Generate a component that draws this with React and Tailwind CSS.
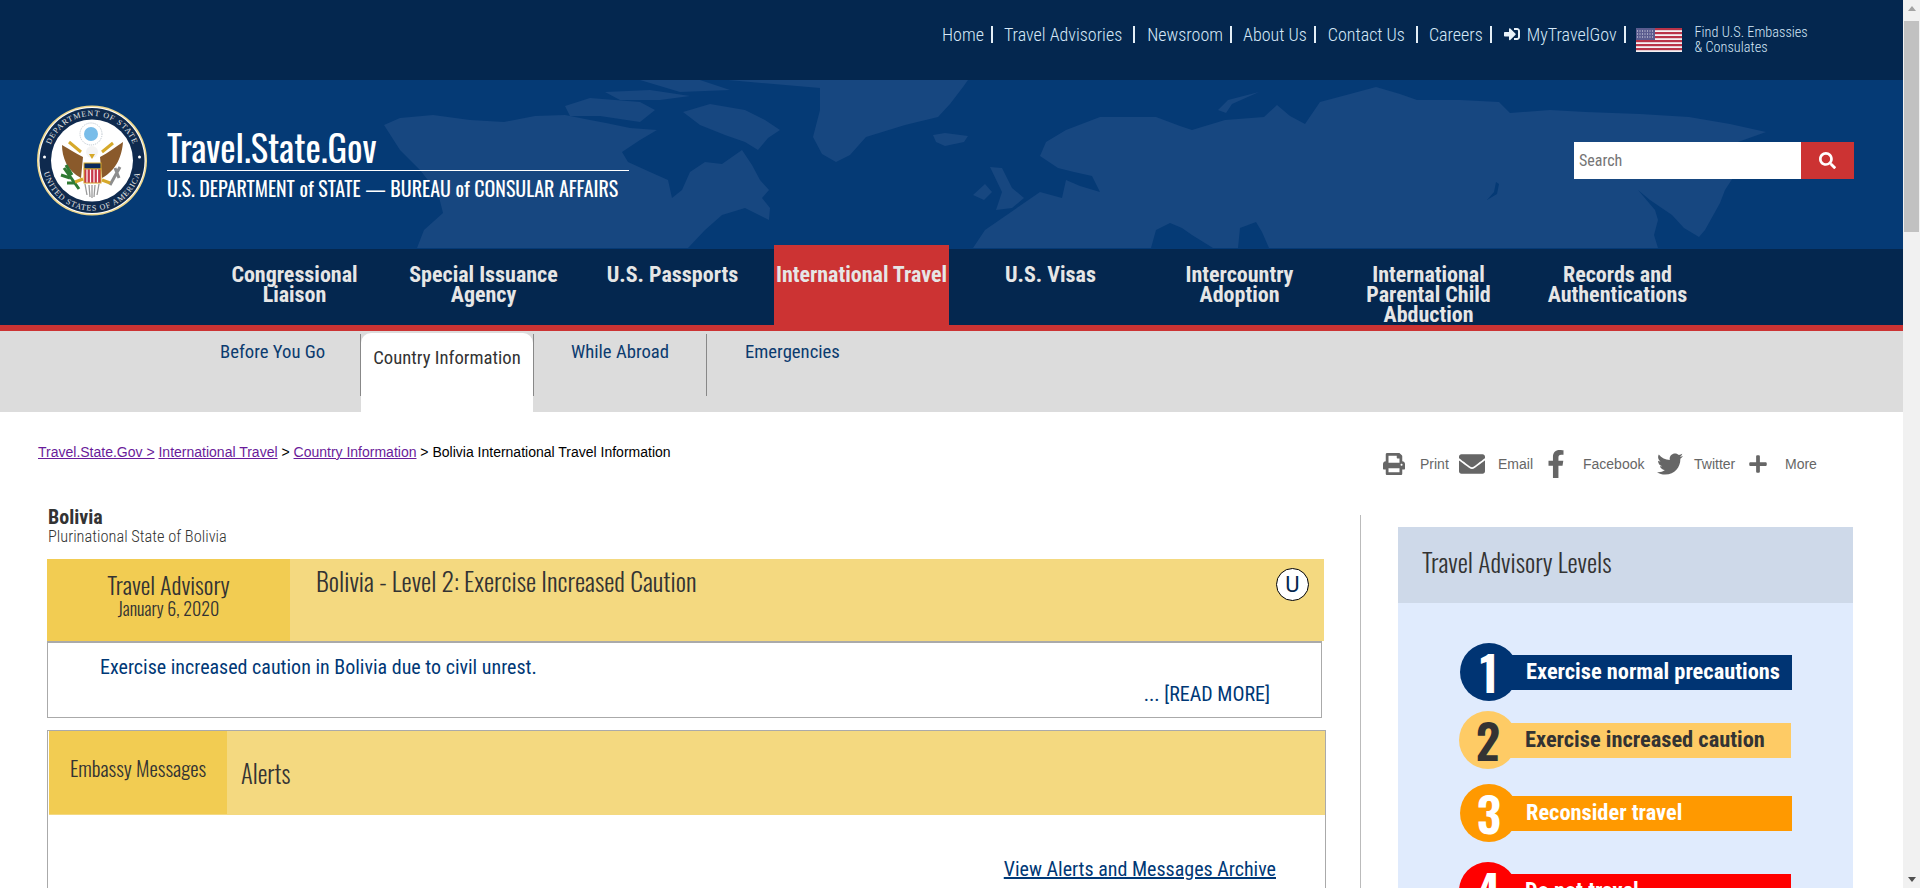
import { FaSearch, FaSignInAlt, FaPrint, FaEnvelope, FaFacebookF, FaTwitter, FaPlus } from 'react-icons/fa'

const oswald = "font-['Oswald','Roboto_Condensed','Roboto',sans-serif]"
const cond = "font-['Roboto_Condensed','Roboto',sans-serif]"

const topLinks = [
  { label: 'Home', cls: 'ml-[942px]', sep: 'ml-[7px]' },
  { label: 'Travel Advisories', cls: 'ml-[11px]', sep: 'ml-[11px]' },
  { label: 'Newsroom', cls: 'ml-[12px]', sep: 'ml-[7px]' },
  { label: 'About Us', cls: 'ml-[11px]', sep: 'ml-[7px]' },
  { label: 'Contact Us', cls: 'ml-[12px]', sep: 'ml-[11px]' },
  { label: 'Careers', cls: 'ml-[11px]', sep: 'ml-[7px]' },
]

const mainNav = [
  ['Congressional', 'Liaison'],
  ['Special Issuance', 'Agency'],
  ['U.S. Passports'],
  ['International Travel'],
  ['U.S. Visas'],
  ['Intercountry', 'Adoption'],
  ['International', 'Parental Child', 'Abduction'],
  ['Records and', 'Authentications'],
]

const levels = [
  { n: '1', text: 'Exercise normal precautions', bg: 'bg-[#003473]', fg: 'text-white', cls: 'mt-[40px] ml-[62px]' },
  { n: '2', text: 'Exercise increased caution', bg: 'bg-[#fecb65]', fg: 'text-[#333333]', cls: 'mt-[10px] ml-[61px]' },
  { n: '3', text: 'Reconsider travel', bg: 'bg-[#ff9900]', fg: 'text-white', cls: 'mt-[15px] ml-[62px]' },
  { n: '4', text: 'Do not travel', bg: 'bg-[#ff0000]', fg: 'text-white', cls: 'mt-[20px] ml-[61px]' },
]

function WorldMap() {
  // rough land outline of the header background
  const land = [
    // north america
    'M384 45 L400 38 L433 35 L470 40 L504 42 L535 36 L565 35 L590 40 L606 43 L630 48 L657 50 L640 60 L622 72 L628 82 L650 92 L668 100 L672 118 L682 110 L690 92 L705 82 L722 84 L742 70 L752 85 L760 100 L769 110 L762 118 L770 128 L769 140 L745 128 L722 135 L705 150 L688 168 L417 168 L424 150 L443 133 L438 113 L420 90 L400 70 Z',
    // arctic islands
    'M565 26 L590 18 L640 22 L655 30 L640 42 L600 36 L570 36 Z',
    'M605 12 L650 10 L690 16 L660 20 L620 20 Z',
    'M683 32 L710 24 L745 30 L765 40 L780 50 L768 58 L758 70 L745 62 L725 55 L700 45 Z',
    'M640 0 L700 0 L730 10 L680 12 Z',
    // greenland
    'M728 0 L968 0 L963 7 L950 24 L938 37 L905 45 L866 57 L850 75 L836 82 L822 74 L813 57 L820 30 L820 8 Z',
    // iceland
    'M933 55 L945 53 L968 56 L964 62 L945 66 L936 62 Z',
    // uk and ireland
    'M990 87 L1002 88 L1012 108 L1024 118 L1012 128 L996 130 L1002 112 Z',
    'M973 115 L985 104 L992 112 L984 120 Z',
    // eurasia with inland seas
    'M973 168 L985 150 L1014 130 L1040 112 L1062 118 L1066 100 L1080 106 L1100 112 L1092 96 L1074 92 L1058 88 L1040 76 L1046 62 L1066 50 L1100 37 L1156 37 L1180 46 L1192 50 L1225 40 L1264 37 L1277 25 L1290 36 L1305 44 L1320 22 L1350 14 L1376 7 L1400 14 L1417 20 L1460 20 L1499 22 L1510 33 L1550 30 L1586 32 L1640 34 L1689 37 L1730 44 L1766 52 L1738 62 L1742 84 L1725 110 L1720 123 L1705 150 L1699 157 L1684 148 L1672 135 L1650 120 L1638 110 L1655 130 L1658 140 L1654 155 L1658 168 Z',
    'M1151 168 L1156 150 L1170 143 L1182 148 L1192 155 L1213 168 Z',
    'M1238 168 L1240 148 L1256 142 L1262 152 L1269 168 Z',
    'M1487 120 L1494 112 L1496 102 L1499 104 L1497 114 Z',
    // novaya zemlya
    'M1218 30 L1228 20 L1259 12 L1232 24 L1226 33 Z',
  ]
  return (
    <svg className="absolute left-0 top-0 w-[1903px] h-[168px]" viewBox="0 0 1903 168" aria-hidden="true">
      <path d={land.join(' ')} fill="#174780" fillRule="evenodd" />
    </svg>
  )
}

function Seal() {
  return (
    <svg className="w-[110px] h-[111px] shrink-0" viewBox="0 0 110 111" aria-hidden="true">
      <defs>
        <path id="sealTop" d="M13 68 A44 44 0 1 1 97 68" />
        <path id="sealBottom" d="M7 44 A49.5 49.5 0 1 0 103 44" />
      </defs>
      <circle cx="55" cy="55.5" r="55" fill="#ecd58a" />
      <circle cx="55" cy="55.5" r="53.5" fill="#fff" />
      <circle cx="55" cy="55.5" r="52.5" fill="#0f2a4e" />
      <circle cx="55" cy="55.5" r="41" fill="#fff" />
      <text fontFamily="Liberation Serif, serif" fontSize="8" fill="#e8e8e8" letterSpacing="0.9">
        <textPath href="#sealTop" startOffset="50%" textAnchor="middle">DEPARTMENT OF STATE</textPath>
      </text>
      <text fontFamily="Liberation Serif, serif" fontSize="8" fill="#e8e8e8" letterSpacing="0.9">
        <textPath href="#sealBottom" startOffset="50%" textAnchor="middle">UNITED STATES OF AMERICA</textPath>
      </text>
      <circle cx="7.5" cy="52" r="1.5" fill="#fff" />
      <circle cx="102.5" cy="52" r="1.5" fill="#fff" />
      {/* glory */}
      <circle cx="54" cy="29" r="11" fill="#fff" stroke="#b9c3cc" strokeDasharray="1 1" />
      <circle cx="54" cy="29" r="7" fill="#79bde9" />
      {/* wings */}
      <path d="M46 52 C38 48 32 44 25 40 C25 52 30 66 44 73 Z" fill="#8a5a2b" />
      <path d="M63 52 C71 48 78 42 86 37 C85 50 80 65 65 73 Z" fill="#8a5a2b" />
      <path d="M32 37 L44 47 M76 38 L65 47" stroke="#d6a92a" strokeWidth="3" />
      <circle cx="55" cy="47" r="6" fill="#f4f4f4" />
      <path d="M52 49 L55 54 L58 49 Z" fill="#d6a92a" />
      {/* shield */}
      <rect x="47" y="58" width="17" height="6" fill="#0b2a5c" stroke="#d6a92a" />
      <rect x="47" y="64" width="17" height="14" fill="#c8394b" stroke="#d6a92a" />
      <path d="M50 64.5 V77.5 M53.5 64.5 V77.5 M57 64.5 V77.5 M60.5 64.5 V77.5" stroke="#fff" strokeWidth="1.2" />
      {/* olive and arrows */}
      <path d="M27 63 L42 84 M24 70 L33 73 M29 60 L35 70 M30 78 L38 78" stroke="#2f7a33" strokeWidth="3" />
      <path d="M83 62 L73 80 M78 63 L82 73" stroke="#8d8d8d" strokeWidth="3" />
      <path d="M38 77 L46 74 M73 78 L65 75" stroke="#d6a92a" strokeWidth="3" />
      {/* tail */}
      <path d="M48 79 L50 90 M52 80 L53 92 M55 80 L55 93 M58 80 L57 92 M62 79 L60 90" stroke="#9a9a9a" strokeWidth="1.3" />
    </svg>
  )
}

function Flag() {
  return (
    <svg className="w-[46px] h-[24px] ml-[10px] mt-[12px] shrink-0" viewBox="0 0 46 24" aria-hidden="true">
      <rect width="46" height="24" fill="#f4f1f3" />
      {[0, 4, 8, 12, 16, 20].map(y => (
        <rect key={y} y={y} width="46" height="2.2" fill="#b93348" />
      ))}
      <rect width="19" height="12" fill="#5a5c8f" />
      <path d="M1 3 H18 M1 6 H18 M1 9 H18" stroke="#e7e7f0" strokeDasharray="1 1.5" />
    </svg>
  )
}

function Sep({ cls = 'ml-[7px]' }) {
  return <span className={`${cls} w-[2px] h-[17px] bg-[#e4eef6]`}></span>
}

function ShareItem({ icon, label, iconCls, textCls }) {
  return (
    <div className="flex items-center">
      <span className={iconCls}>{icon}</span>
      <span className={textCls}>{label}</span>
    </div>
  )
}

function App() {
  return (
    <div className="flex h-[888px] w-[1920px] overflow-hidden bg-white">
      <div className="w-[1903px] shrink-0">
        {/* top links */}
        <div className={`flex items-center h-[80px] pb-[12px] bg-[#04274f] text-[#d5e8f7] text-[18px] font-light ${cond}`}>
          {topLinks.map(item => (
            <div key={item.label} className={`flex items-center ${item.cls}`}>
              <a>{item.label}</a>
              <Sep cls={item.sep} />
            </div>
          ))}
          <FaSignInAlt className="ml-[11px] w-[18px] h-[16px] text-[#e8f2fa]" />
          <a className="ml-[6px]">MyTravelGov</a>
          <Sep />
          <Flag />
          <div className="ml-[13px] mt-[12px] text-[14.3px] leading-[15px]">
            <div>Find U.S. Embassies</div>
            <div>&amp; Consulates</div>
          </div>
        </div>

        {/* logo band */}
        <div className="relative h-[169px] bg-[#053a75] overflow-hidden">
          <WorldMap />
          <div className="relative flex h-full pl-[37px] pt-[25px]">
            <Seal />
            <div className="ml-[20px] mt-[19px] w-[462px] text-white">
              <div className={`text-[36.5px] leading-[45px] font-normal border-b border-white h-[47px] ${oswald}`}>Travel.State.Gov</div>
              <div className={`mt-[4px] text-[20px] leading-[26px] font-normal whitespace-nowrap ${oswald}`}>U.S. DEPARTMENT of STATE — BUREAU of CONSULAR AFFAIRS</div>
            </div>
            <div className="flex ml-[945px] mt-[37px] h-[37px]">
              <div className={`w-[227px] bg-white pl-[5px] flex items-center text-[16px] text-[#757575] ${cond}`}>Search</div>
              <div className="w-[53px] bg-[#cc3333] flex items-center justify-center text-white">
                <FaSearch className="w-[17px] h-[17px]" />
              </div>
            </div>
          </div>
        </div>

        {/* main nav */}
        <div className={`flex h-[76px] pl-[200px] bg-[#04274f] text-[#e6e6e6] text-[22px] leading-[20px] font-bold text-center ${cond}`}>
          {mainNav.map(lines => (
            lines[0] === 'International Travel' ? (
              <div key={lines[0]} className="relative w-[175px] mx-[7px] -mt-[4px] h-[80px] pt-[20px] bg-[#cc3333] whitespace-nowrap">
                {lines[0]}
              </div>
            ) : (
              <div key={lines[0]} className="w-[189px] pt-[16px]">
                {lines.map(l => <div key={l}>{l}</div>)}
              </div>
            )
          ))}
        </div>
        <div className="h-[6px] bg-[#cc3333]"></div>

        {/* sub nav */}
        <div className={`flex h-[81px] pl-[200px] bg-[#dcdcdc] text-[#0b3b6f] text-[18.7px] leading-[20px] ${cond}`}>
          <div className="w-[161px] h-[62px] mt-[3px] pt-[8px] pl-[20px] border-r border-[#888888]">Before You Go</div>
          <div className="w-[172px] h-[79px] mt-[2px] pt-[15px] text-center bg-white rounded-t-[10px] text-[#333333]">Country Information</div>
          <div className="w-[174px] h-[62px] mt-[3px] pt-[8px] pl-[37px] border-x border-[#888888]">While Abroad</div>
          <div className="h-[62px] mt-[3px] pt-[8px] pl-[38px]">Emergencies</div>
        </div>

        {/* breadcrumb and share */}
        <div className="flex h-[95px] font-['Liberation_Sans',sans-serif]">
          <div className="ml-[38px] w-[700px] mt-[32px] text-[14px] leading-[16px] text-black">
            <a className="underline text-[#6a1b9a]">Travel.State.Gov &gt;</a>{' '}
            <a className="underline text-[#6a1b9a]">International Travel</a> &gt;{' '}
            <a className="underline text-[#6a1b9a]">Country Information</a> &gt; Bolivia International Travel Information
          </div>
          <div className="flex items-center h-[30px] mt-[37px] ml-[644px] text-[14px] text-[#666666]">
            <ShareItem icon={<FaPrint className="w-[24px] h-[22px]" />} label="Print" iconCls="w-[38px]" textCls="w-[38px]" />
            <ShareItem icon={<FaEnvelope className="w-[28px] h-[26px]" />} label="Email" iconCls="w-[40px]" textCls="w-[49px]" />
            <ShareItem icon={<FaFacebookF className="w-[18px] h-[28px]" />} label="Facebook" iconCls="w-[36px]" textCls="w-[73px]" />
            <ShareItem icon={<FaTwitter className="w-[28px] h-[26px]" />} label="Twitter" iconCls="w-[38px]" textCls="w-[54px]" />
            <ShareItem icon={<FaPlus className="w-[20px] h-[20px]" />} label="More" iconCls="w-[37px]" textCls="" />
          </div>
        </div>

        <div className="flex">
          {/* left column */}
          <div className={`ml-[47px] w-[1279px] shrink-0 ${cond}`}>
            <div className="pl-[1px] text-[#333333] h-[40px]">
              <div className="text-[20px] leading-[20px] font-bold">Bolivia</div>
              <div className="text-[16.4px] leading-[20px] font-light">Plurinational State of Bolivia</div>
            </div>

            <div className="flex w-[1277px] h-[82px] mt-[12px] bg-[#f4d980] text-[#333333]">
              <div className={`w-[243px] bg-[#f2cc52] text-center pt-[11px] font-light ${oswald}`}>
                <div className="text-[24px] leading-[28px]">Travel Advisory</div>
                <div className="text-[18px] leading-[20px]">January 6, 2020</div>
              </div>
              <div className={`flex-1 pl-[26px] pt-[5px] text-[25.6px] leading-[32px] font-light ${oswald}`}>Bolivia - Level 2: Exercise Increased Caution</div>
              <div className="flex items-center justify-center w-[33px] h-[33px] mt-[9px] mr-[15px] rounded-full bg-white border border-black text-[#04274f] text-[22px] font-['Roboto',sans-serif]">U</div>
            </div>
            <div className="relative w-[1275px] h-[77px] border border-t-2 border-[#aaaaaa] text-[#003876] text-[20px]">
              <div className="pl-[52px] pt-[12px] leading-[24px]">Exercise increased caution in Bolivia due to civil unrest.</div>
              <div className="text-right pr-[51px] pt-[3px] leading-[24px]">... [READ MORE]</div>
            </div>

            <div className="mt-[12px] h-[300px] border border-[#aaaaaa]">
              <div className={`flex h-[84px] ml-[1px] bg-[#f4d980] text-[#333333] font-light ${oswald}`}>
                <div className="w-[178px] h-[83px] bg-[#f2cc52] pt-[25px] text-center text-[21px] leading-[24px]">Embassy Messages</div>
                <div className="pl-[14px] pt-[26px] text-[24.5px] leading-[32px]">Alerts</div>
              </div>
              <div className="pt-[42px] pr-[49px] text-right text-[20px] leading-[24px] text-[#003876]">
                <a className="underline">View Alerts and Messages Archive</a>
              </div>
            </div>
          </div>

          {/* right column */}
          <div className="ml-[34px] mt-[8px] pl-[37px] pt-[12px] h-[400px] border-l border-[#bbbbbb]">
            <div className={`w-[455px] h-[400px] bg-[#e0ebfd] ${cond}`}>
              <div className={`h-[76px] pl-[24px] pt-[18px] bg-[#ced9e9] text-[#333333] text-[25.6px] leading-[32px] font-light ${oswald}`}>Travel Advisory Levels</div>
              {levels.map(level => (
                <div key={level.n} className={`flex items-center w-[332px] h-[58px] ${level.cls}`}>
                  <div className={`flex items-center justify-center w-[58px] h-[58px] shrink-0 rounded-full text-[48px] leading-[58px] font-semibold ${oswald} ${level.bg} ${level.fg}`}>{level.n}</div>
                  <div className={`flex items-center flex-1 h-[35px] -ml-[8px] pl-[16px] text-[22.4px] font-bold whitespace-nowrap ${level.bg} ${level.fg}`}>{level.text}</div>
                </div>
              ))}
            </div>
          </div>
        </div>
      </div>

      {/* page scrollbar */}
      <div className="flex flex-col items-center w-[17px] h-[888px] bg-[#f1f1f1]">
        <div className="h-[17px] flex items-center justify-center">
          <div className="w-0 h-0 border-x-[4px] border-x-transparent border-b-[5px] border-b-[#a3a3a3]"></div>
        </div>
        <div className="w-[15px] h-[211px] mt-[4px] bg-[#c1c1c1]"></div>
        <div className="mt-auto h-[17px] flex items-center justify-center">
          <div className="w-0 h-0 border-x-[4px] border-x-transparent border-t-[5px] border-t-[#505050]"></div>
        </div>
      </div>
    </div>
  )
}

export default App
